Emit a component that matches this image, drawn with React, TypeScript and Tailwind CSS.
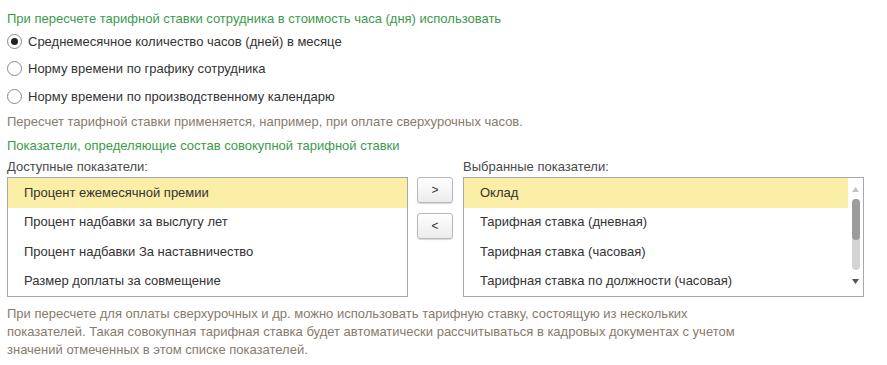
import React, { useState } from 'react';

const available = [
  'Процент ежемесячной премии',
  'Процент надбавки за выслугу лет',
  'Процент надбавки За наставничество',
  'Размер доплаты за совмещение',
];

const selected = [
  'Оклад',
  'Тарифная ставка (дневная)',
  'Тарифная ставка (часовая)',
  'Тарифная ставка по должности (часовая)',
];

const modes = [
  'Среднемесячное количество часов (дней) в месяце',
  'Норму времени по графику сотрудника',
  'Норму времени по производственному календарю',
];

function Radio({ checked }: { checked: boolean }) {
  return (
    <span className="w-[15px] h-[15px] rounded-full border border-[#8a8a8a] bg-white flex items-center justify-center shrink-0">
      {checked && <span className="w-[7px] h-[7px] rounded-full bg-[#222]" />}
    </span>
  );
}

function ListBox({ items, scroll }: { items: string[]; scroll?: boolean }) {
  return (
    <div className="w-[401px] h-[120px] border border-[#a8a8a8] bg-white flex">
      <div className="flex-1">
        {items.map((t, i) => (
          <div
            key={t}
            className={`h-[29.5px] flex items-center pl-4 pb-[1px] text-[13px] text-[#333] ${i === 0 ? 'bg-[#fbeea6]' : ''}`}
          >
            {t}
          </div>
        ))}
      </div>
      {scroll && (
        <div className="w-[15px] flex flex-col items-center">
          <svg width="7" height="5" viewBox="0 0 7 5" className="mt-[9px]">
            <path d="M0 5 L3.5 0 L7 5 Z" fill="#c4c4c4" />
          </svg>
          <div className="mt-[7px] w-[8px] h-[71px] rounded-full bg-[#d4d4d4] flex flex-col">
            <div className="w-[8px] h-[41px] rounded-full bg-[#9c9c9c]" />
          </div>
          <svg width="7" height="5" viewBox="0 0 7 5" className="mt-[9px]">
            <path d="M0 0 L3.5 5 L7 0 Z" fill="#555" />
          </svg>
        </div>
      )}
    </div>
  );
}

function ArrowButton({ label }: { label: string }) {
  return (
    <button className="w-[36px] h-[26px] rounded-[3px] border border-[#b8b8b8] bg-gradient-to-b from-white to-[#ececec] shadow-[0_1px_1px_rgba(0,0,0,0.15)] text-[12px] text-[#333] flex items-center justify-center">
      {label}
    </button>
  );
}

export default function App() {
  const [mode, setMode] = useState(0);

  return (
    <div className="w-[887px] h-[365px] bg-white px-[7px] pt-[11px] font-['Liberation_Sans',Arial,sans-serif] text-[13px] leading-[15px] text-[#333]">
      <div className="text-[#3c9a4c]">При пересчете тарифной ставки сотрудника в стоимость часа (дня) использовать</div>

      <div className="mt-[7px] flex flex-col gap-[11.5px]">
        {modes.map((m, i) => (
          <label key={m} className="flex items-center gap-[6px] h-[16px] cursor-pointer" onClick={() => setMode(i)}>
            <Radio checked={mode === i} />
            <span>{m}</span>
          </label>
        ))}
      </div>

      <div className="mt-[10px] text-[#877b6d]">
        Пересчет тарифной ставки применяется, например, при оплате сверхурочных часов.
      </div>

      <div className="mt-[9px] text-[#3c9a4c]">Показатели, определяющие состав совокупной тарифной ставки</div>

      <div className="mt-[6px] flex gap-[9px]">
        <div className="flex flex-col gap-[3px]">
          <div className="text-[#4a4a4a]">Доступные показатели:</div>
          <ListBox items={available} />
        </div>
        <div className="pt-[18px] flex flex-col gap-[10px]">
          <ArrowButton label=">" />
          <ArrowButton label="<" />
        </div>
        <div className="flex flex-col gap-[3px] ml-[1px]">
          <div className="text-[#4a4a4a]">Выбранные показатели:</div>
          <ListBox items={selected} scroll />
        </div>
      </div>

      <div className="mt-[8px] text-[#877b6d] leading-[18px] w-[760px]">
        При пересчете для оплаты сверхурочных и др. можно использовать тарифную ставку, состоящую из нескольких
        показателей. Такая совокупная тарифная ставка будет автоматически рассчитываться в кадровых документах с учетом
        значений отмеченных в этом списке показателей.
      </div>
    </div>
  );
}
